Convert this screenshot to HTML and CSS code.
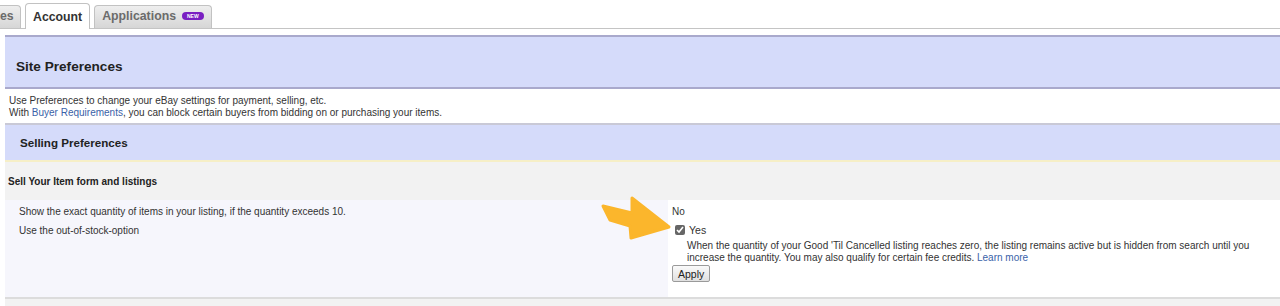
FILE: index.html
```html
<!DOCTYPE html>
<html lang="en">
<head>
    <meta charset="UTF-8">
    <meta name="viewport" content="width=device-width, initial-scale=1.0">
    <link rel="stylesheet" href="styles.css">
</head>
<body>
<div class="tabs">
	<div class="tab tab-cut">es</div>
	<div class="tab active">Account</div>
	<div class="tab">Applications <span class="badge">NEW</span></div>
</div>

<section class="page">
	<div class="siteHead">
		<h1>Site Preferences</h1>
	</div>
	<div class="intro">
		Use Preferences to change your eBay settings for payment, selling, etc.<br>
		With <a href="#">Buyer Requirements</a>, you can block certain buyers from bidding on or purchasing your items.
	</div>

	<div class="sectionHead">
		<h2>Selling Preferences</h2>
	</div>
	<div class="subHead">Sell Your Item form and listings</div>

	<div class="prefRow">
		<div class="labels">
			<div class="label">Show the exact quantity of items in your listing, if the quantity exceeds 10.</div>
			<div class="label">Use the out-of-stock-option</div>
		</div>
		<div class="values">
			<div class="value">No</div>
			<label class="check">
				<input type="checkbox" checked>
				<span>Yes</span>
			</label>
			<p class="desc">When the quantity of your Good 'Til Cancelled listing reaches zero, the listing remains active but is hidden from search until you<br>
			increase the quantity. You may also qualify for certain fee credits. <a href="#">Learn more</a></p>
			<button class="apply">Apply</button>
		</div>
		<svg class="arrow" width="84" height="50" viewBox="595 192 84 50">
			<polygon points="603,204 632,211 632,196 669,225 631,236 630,224 610,218"
				fill="#fbb62c" stroke="#fbb62c" stroke-width="3" stroke-linejoin="round" />
		</svg>
	</div>
	<div class="footer"></div>
</section>
</body>
</html>
```

FILE: styles.css
```css
body {
	margin: 0;
	padding: 0;
	background-color: #fff;
	font-family: "Liberation Sans", Arial, sans-serif;
	font-size: 10px;
	color: #333;
}

a {
	color: #3a62a8;
	text-decoration: none;
}

.tabs {
	display: flex;
	align-items: flex-end;
	height: 28px;
	border-bottom: 1px solid #c4c4c4;
}

.tab {
	height: 23px;
	box-sizing: border-box;
	padding: 3px 7px 0 7px;
	margin-right: 4px;
	font-size: 12.3px;
	font-weight: bold;
	color: #6b6b6b;
	background: linear-gradient(180deg, #eeeeee 0%, #d6d6d6 100%);
	border: 1px solid #c2c2c2;
	border-bottom: none;
	border-radius: 4px 4px 0 0;
	display: flex;
	align-items: flex-start;
	gap: 6px;
}

.tab-cut {
	padding-left: 0;
	border-left: none;
	border-radius: 0 4px 0 0;
	width: 21px;
}

.tab.active {
	height: 26px;
	margin-bottom: -1px;
	padding-top: 6px;
	background: #fff;
	color: #333;
}

.badge {
	margin-top: 3px;
	background-color: #7a1fc2;
	color: #fff;
	font-size: 5px;
	line-height: 8px;
	padding: 0 5px;
	border-radius: 4px;
}

.page {
	margin: 6px 0 0 5px;
	position: relative;
}

.siteHead {
	background-color: #d5dbfa;
	border-top: 2px solid #a9a9cc;
	border-bottom: 2px solid #a9a9cc;
	height: 48px;
	display: flex;
	align-items: center;
	padding-top: 2px;
}

.siteHead h1 {
	margin: 6px 0 0 11px;
	font-size: 13.6px;
	color: #222;
}

.intro {
	line-height: 12px;
	padding: 6px 0 4px 4px;
}

.sectionHead {
	background-color: #d5dbfa;
	border-top: 2px solid #c9c9d6;
	border-bottom: 2px solid #f6efc7;
	height: 35px;
	display: flex;
	align-items: center;
}

.sectionHead h2 {
	margin: 0 0 0 15px;
	font-size: 11.6px;
	color: #222;
}

.subHead {
	background-color: #f2f2f2;
	height: 38px;
	display: flex;
	align-items: center;
	padding-left: 3px;
	font-weight: bold;
	color: #222;
}

.prefRow {
	display: grid;
	grid-template-columns: 663px 1fr;
	height: 97px;
	position: relative;
}

.labels {
	background-color: #f6f6fc;
	padding: 6px 14px;
}

.label {
	height: 19px;
}

.values {
	background-color: #fff;
	padding: 6px 4px;
}

.value {
	height: 16px;
}

.check {
	display: flex;
	align-items: center;
	gap: 4px;
	margin: 1px 0 0 1px;
	height: 14px;
	font-size: 10.5px;
}

.check input {
	width: 10px;
	height: 10px;
	margin: 0 0 0 2px;
	accent-color: #666;
}

.desc {
	margin: 3px 0 1px 15px;
	line-height: 12px;
}

.apply {
	font-family: "Liberation Sans", Arial, sans-serif;
	font-size: 10.5px;
	color: #222;
	padding: 1px 5px;
	height: 17px;
	border: 1px solid #9a9a9a;
	border-radius: 2px;
	background: linear-gradient(180deg, #fafafa 0%, #e0e0e0 100%);
}

.arrow {
	position: absolute;
	left: 590px;
	top: -6px;
}

.footer {
	border-top: 2px solid #dcdcdc;
	background-color: #f2f2f2;
	height: 12px;
}
```
